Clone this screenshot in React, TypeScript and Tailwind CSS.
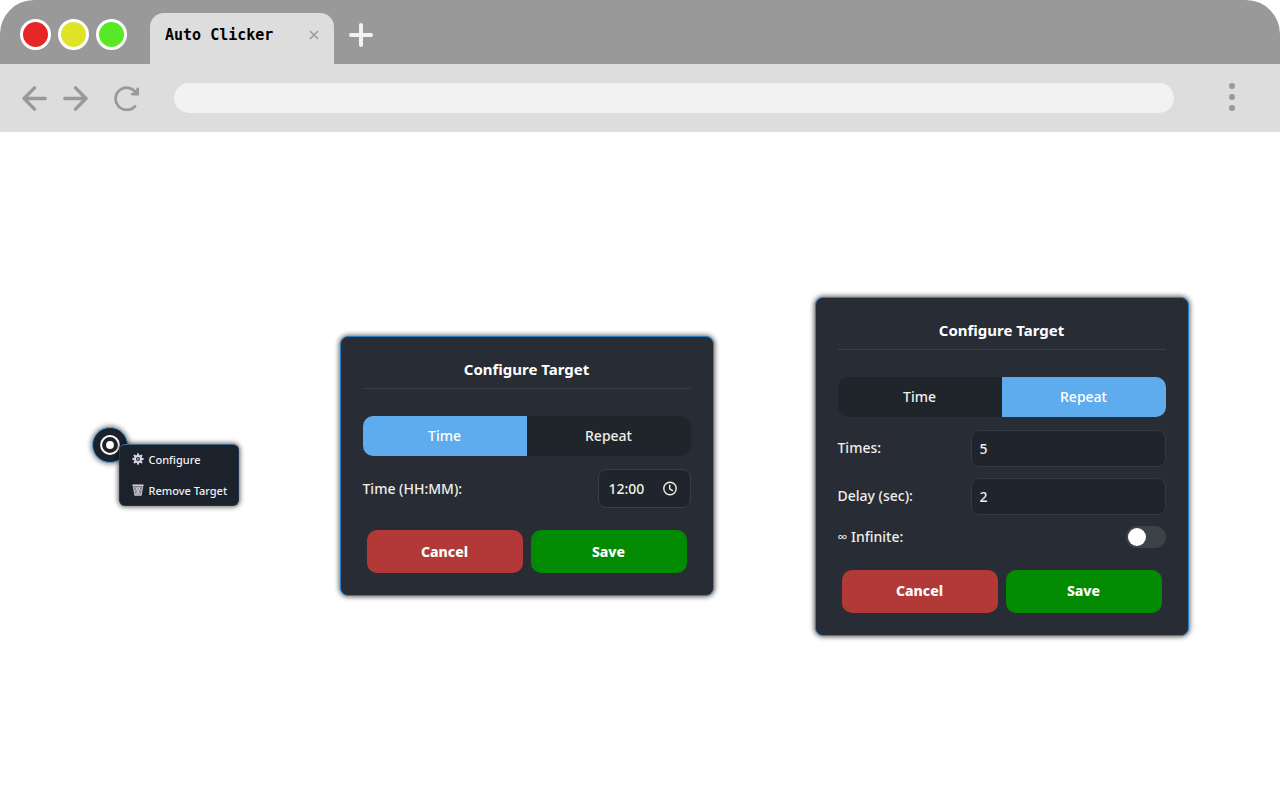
import { useState } from "react";

type Mode = "time" | "repeat";

const GEAR_ANGLES = [0, 45, 90, 135, 180, 225, 270, 315];

function GearIcon() {
  return (
    <svg className="w-3 h-3 shrink-0" viewBox="0 0 24 24" aria-hidden="true">
      <g fill="#d9d3ea">
        {GEAR_ANGLES.map(angle => (
          <rect
            key={angle}
            x="10"
            y="0.5"
            width="4"
            height="6"
            rx="1.5"
            transform={`rotate(${angle} 12 12)`}
          />
        ))}
      </g>
      <circle cx="12" cy="12" r="6" fill="none" stroke="#d9d3ea" strokeWidth="4" />
      <circle cx="12" cy="12" r="2" fill="#a9a3bd" />
    </svg>
  );
}

function TrashIcon() {
  return (
    <svg className="w-3 h-3 shrink-0" viewBox="0 0 24 24" aria-hidden="true">
      <path d="M1 1h22v4H1z" fill="#d6d3dc" />
      <path d="M2.500 6h19l-2.500 17h-14z" fill="#85828d" />
      <path
        d="M3 6l2.500 16.500h13L21 6M7 6l10 16M12 6l5 8M17 6L7 22M12 6l-5 8M12 14v8"
        fill="none"
        stroke="#d6d3dc"
        strokeWidth="1.600"
      />
    </svg>
  );
}

function ClockIcon() {
  return (
    <svg className="w-4 h-4" viewBox="0 0 16 16" fill="none" stroke="#f0efe6" strokeWidth="1.400" aria-hidden="true">
      <circle cx="8" cy="7.500" r="6.200" />
      <path d="M7.700 3.700v4.200l3.200 1.900" />
    </svg>
  );
}

function BrowserBar() {
  return (
    <header className="rounded-t-[34px] overflow-hidden bg-[#999999]">

      <div className="h-16 flex items-end">
        <div className="flex gap-[7px] pl-5 pb-[14px]">
          <span className="w-[31px] h-[31px] rounded-full border-3 border-white bg-[#e62626]" />
          <span className="w-[31px] h-[31px] rounded-full border-3 border-white bg-[#e0e426]" />
          <span className="w-[31px] h-[31px] rounded-full border-3 border-white bg-[#58e826]" />
        </div>

        <div className="ml-[23px] w-[184px] h-[51px] px-[15px] pb-2 rounded-t-[14px] bg-[#dddddd] flex items-center justify-between">
          <span className="font-['DejaVu_Sans_Mono',monospace] font-bold text-[15px] leading-5 text-black whitespace-nowrap">
            Auto Clicker
          </span>
          <button type="button" aria-label="Close tab">
            <svg className="w-[10px] h-[10px]" viewBox="0 0 10 10" stroke="#999999" strokeWidth="1.500" aria-hidden="true">
              <path d="M1 1l8 8M9 1L1 9" />
            </svg>
          </button>
        </div>

        <button type="button" aria-label="New tab" className="ml-[15px] mb-[17px]">
          <svg className="w-6 h-6" viewBox="0 0 24 24" stroke="#f2f2f2" strokeWidth="4" strokeLinecap="round" aria-hidden="true">
            <path d="M12 2v20M2 12h20" />
          </svg>
        </button>
      </div>

      <div className="h-[68px] pl-[22px] pr-[45px] flex items-center bg-[#dddddd] text-[#999999]">
        <button type="button" aria-label="Back">
          <svg className="w-[25px] h-[25px]" viewBox="0 0 25 25" fill="none" stroke="currentColor" strokeWidth="3.400" strokeLinecap="round" strokeLinejoin="round" aria-hidden="true">
            <path d="M23.200 12.500H2M12.500 1.900L2 12.500l10.500 10.600" />
          </svg>
        </button>
        <button type="button" aria-label="Forward" className="ml-4">
          <svg className="w-[25px] h-[25px]" viewBox="0 0 25 25" fill="none" stroke="currentColor" strokeWidth="3.400" strokeLinecap="round" strokeLinejoin="round" aria-hidden="true">
            <path d="M1.800 12.500H23M12.500 1.900L23 12.500L12.500 23.100" />
          </svg>
        </button>
        <button type="button" aria-label="Reload" className="ml-[26px]">
          <svg className="w-[25px] h-[25px]" viewBox="0 0 25 25" fill="none" stroke="currentColor" strokeWidth="2.800" strokeLinecap="round" aria-hidden="true">
            <path d="M21 20.200A11.100 11.100 0 1 1 22.500 7.600" />
            <path d="M23.600 3v5.100h-5.200" />
          </svg>
        </button>

        <input
          type="text"
          aria-label="Address"
          className="ml-[35px] flex-1 min-w-0 h-[30px] px-4 rounded-full bg-[#f2f2f2] text-sm text-gray-700 outline-none"
        />

        <button type="button" aria-label="Menu" className="ml-[55px] pb-[2px] flex flex-col gap-[5px]">
          <span className="w-[6px] h-[6px] rounded-full bg-[#999999]" />
          <span className="w-[6px] h-[6px] rounded-full bg-[#999999]" />
          <span className="w-[6px] h-[6px] rounded-full bg-[#999999]" />
        </button>
      </div>

    </header>
  );
}

function TargetMenu() {
  return (
    <div className="w-[147px] shrink-0">
      <button
        type="button"
        aria-label="Target"
        className="block w-9 h-9 rounded-full border border-[#4ea3e6] bg-[#1c222b] shadow-[0_0_5px_1px_rgba(0,0,0,0.5)]"
      >
        <svg viewBox="0 0 34 34" aria-hidden="true">
          <circle cx="17" cy="17" r="8.900" fill="none" stroke="#ffffff" strokeWidth="2" />
          <circle cx="17" cy="17" r="3.900" fill="#ffffff" />
        </svg>
      </button>

      <div className="relative -mt-[19px] ml-[27px] rounded-md border border-t-[#41698c] border-[#25364f] bg-[#1c222b] text-[#f1f1f4] text-[11px] leading-[15px] font-medium shadow-[0_0_5px_1px_rgba(0,0,0,0.6)]">
        <button type="button" className="w-full pl-3 pt-[7px] pb-2 flex items-center gap-[5px] whitespace-nowrap">
          <GearIcon />
          Configure
        </button>
        <button type="button" className="w-full pl-3 pt-2 pb-[7px] flex items-center gap-[5px] whitespace-nowrap">
          <TrashIcon />
          Remove Target
        </button>
      </div>
    </div>
  );
}

function TimeFields() {
  const [time, setTime] = useState("12:00");

  return (
    <div className="flex items-center justify-between">
      <label htmlFor="time">Time (HH:MM):</label>
      <div className="w-[93px] h-[39px] pl-[10px] pr-3 flex items-center justify-between rounded-lg border border-[#3a3f47] bg-[#20242c]">
        <input
          id="time"
          type="text"
          value={time}
          onChange={e => setTime(e.target.value)}
          className="w-12 min-w-0 bg-transparent outline-none"
        />
        <button type="button" aria-label="Pick time">
          <ClockIcon />
        </button>
      </div>
    </div>
  );
}

function RepeatFields() {
  const [times, setTimes] = useState("5");
  const [delay, setDelay] = useState("2");
  const [infinite, setInfinite] = useState(false);

  return (
    <>
      <div className="flex items-center justify-between">
        <label htmlFor="times">Times:</label>
        <input
          id="times"
          type="number"
          value={times}
          onChange={e => setTimes(e.target.value)}
          className="w-[195px] h-[37px] px-2 rounded-lg border border-[#353a42] bg-[#20242c] outline-none"
        />
      </div>

      <div className="flex items-center justify-between">
        <label htmlFor="delay">Delay (sec):</label>
        <input
          id="delay"
          type="number"
          value={delay}
          onChange={e => setDelay(e.target.value)}
          className="w-[195px] h-[37px] px-2 rounded-lg border border-[#353a42] bg-[#20242c] outline-none"
        />
      </div>

      <div className="flex items-center justify-between">
        <label htmlFor="infinite">∞ Infinite:</label>
        <input
          id="infinite"
          type="checkbox"
          role="switch"
          checked={infinite}
          onChange={e => setInfinite(e.target.checked)}
          className="appearance-none w-10 h-[22px] p-[2px] flex rounded-full bg-[#3d4148] before:block before:w-[18px] before:h-[18px] before:rounded-full before:bg-white checked:justify-end checked:bg-[#5eaced]"
        />
      </div>
    </>
  );
}

function ConfigurePanel({ initialMode }: { initialMode: Mode }) {
  const [mode, setMode] = useState<Mode>(initialMode);

  const active = "bg-[#5eaced] text-white";
  const inactive = "bg-[#20242b] text-[#f0efe9]";

  return (
    <section className="w-[374px] px-[22px] pt-[21px] pb-[22px] rounded-lg border border-[#2f7fc4] bg-[#282c35] text-[#f0efe9] text-[14px] leading-[22px] font-medium shadow-[0_0_5px_1px_rgba(0,0,0,0.6)]">

      <h2 className="pb-2 border-b border-[#3b4048] text-center text-[15px] leading-[22px] font-bold text-white">
        Configure Target
      </h2>

      <div className="mt-[27px] flex h-10 rounded-[10px] overflow-hidden">
        <button
          type="button"
          onClick={() => setMode("time")}
          className={`flex-1 ${mode === "time" ? active : inactive}`}
        >
          Time
        </button>
        <button
          type="button"
          onClick={() => setMode("repeat")}
          className={`flex-1 ${mode === "repeat" ? active : inactive}`}
        >
          Repeat
        </button>
      </div>

      <div className="mt-[13px] flex flex-col gap-[11px]">
        {mode === "time" ? <TimeFields /> : <RepeatFields />}
      </div>

      <div className="mt-[22px] px-1 flex gap-2 font-extrabold text-white">
        <button type="button" className="flex-1 h-[43px] rounded-[10px] bg-[#b33838]">
          Cancel
        </button>
        <button type="button" className="flex-1 h-[43px] rounded-[10px] bg-[#028a02]">
          Save
        </button>
      </div>

    </section>
  );
}

export default function App() {
  return (
    <div className="min-h-screen flex flex-col bg-white font-['Noto_Sans','Open_Sans',sans-serif]">
      <BrowserBar />

      <main className="flex-1 flex flex-wrap items-center justify-center gap-[101px]">
        <TargetMenu />
        <ConfigurePanel initialMode="time" />
        <ConfigurePanel initialMode="repeat" />
      </main>
    </div>
  );
}
